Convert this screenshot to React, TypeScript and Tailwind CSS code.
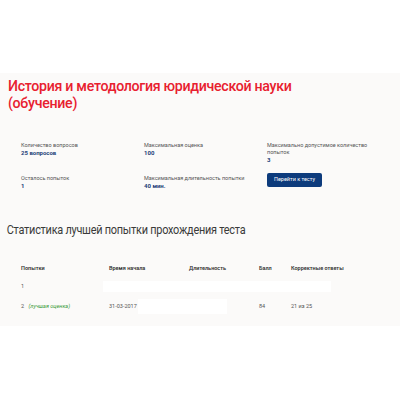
const stats = [
  { label: "Количество вопросов", value: "25 вопросов" },
  { label: "Максимальная оценка", value: "100" },
  { label: "Максимально допустимое количество попыток", value: "3" },
  { label: "Осталось попыток", value: "1" },
  { label: "Максимальная длительность попытки", value: "40 мин." },
];

function Stat({ label, value }: { label: string; value: string }) {
  return (
    <div className="leading-[7px]">
      <div className="text-[5.5px] text-[#555]">{label}</div>
      <div className="text-[6px] font-bold text-[#1d3f78]">{value}</div>
    </div>
  );
}

export default function App() {
  return (
    <div className="h-[400px] w-[400px] bg-white font-['Roboto',sans-serif]">
      <div className="h-[73px]" />
      <div className="bg-[#fbfaf9] pb-[12px] pt-[5px]">
        <h1 className="pl-[8px] text-[14.2px] font-medium leading-[17px] tracking-[-0.3px] text-[#e8202f]">
          История и методология юридической науки
          <br />
          (обучение)
        </h1>

        <div className="mt-[30px] grid grid-cols-[123px_123px_112px] gap-y-[12px] pl-[21px]">
          <Stat {...stats[0]} />
          <Stat {...stats[1]} />
          <Stat {...stats[2]} />
          <Stat {...stats[3]} />
          <Stat {...stats[4]} />
          <div className="-mt-[2px] flex">
            <button className="h-[14px] w-[55px] rounded-[2px] bg-[#0d3b7c] text-[5.5px] leading-none text-white">
              Перейти к тесту
            </button>
          </div>
        </div>

        <h2 className="mt-[33px] origin-left scale-x-[0.84] whitespace-nowrap pl-[8px] text-[13px] leading-[16px] tracking-[-0.3px] text-[#3a3a3a]">
          Статистика лучшей попытки прохождения теста
        </h2>

        <div className="mt-[24px] pl-[21px] text-[5.5px] text-[#555]">
          <div className="flex h-[12px] items-center font-semibold text-[#333]">
            <div className="w-[88px]">Попытки</div>
            <div className="w-[80px]">Время начала</div>
            <div className="w-[70px]">Длительность</div>
            <div className="w-[32px]">Балл</div>
            <div>Корректные ответы</div>
          </div>
          <div className="mt-[6px] flex h-[12px] items-center">
            <div className="w-[82px]">1</div>
            <div className="h-[11px] w-[228px] bg-white" />
          </div>
          <div className="mt-[7px] flex h-[15px] items-center">
            <div className="w-[88px]">
              2 <span className="ml-[3px] italic text-[#3a9a3a]">(лучшая оценка)</span>
            </div>
            <div className="w-[29px]">31-03-2017</div>
            <div className="h-[15px] w-[89px] self-start bg-white" />
            <div className="ml-[32px] w-[32px]">84</div>
            <div>21 из 25</div>
          </div>
        </div>
      </div>
    </div>
  );
}
